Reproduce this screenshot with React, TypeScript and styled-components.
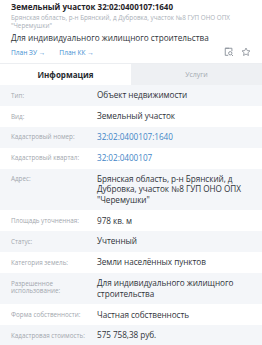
import styled, {createGlobalStyle} from 'styled-components';

const GlobalStyle = createGlobalStyle`
  body {
    margin: 0;
    background: #ffffff;
    font-family: "Open Sans", "Noto Sans", sans-serif;
  }
`;

const Page = styled.div`
  width: 262px;
  height: 345px;
  overflow: hidden;
  background: #ffffff;
`;

const Header = styled.div`
  padding: 1px 11px 5px;
`;

const Title = styled.h1`
  margin: 0;
  font-size: 8px;
  line-height: 12px;
  font-weight: 700;
  color: #1f2328;
`;

const Address = styled.div`
  margin-top: 1px;
  font-size: 6.3px;
  line-height: 7.5px;
  color: #aab0b8;
`;

const Purpose = styled.div`
  margin-top: 3px;
  font-size: 8.2px;
  line-height: 11px;
  color: #30343a;
`;

const LinksRow = styled.div`
  margin-top: 3px;
  height: 12px;
  display: flex;
  align-items: center;
`;

const PlanLink = styled.a`
  font-size: 6.6px;
  color: #3f8fd2;
  text-decoration: none;
  margin-right: 14px;
`;

const Actions = styled.div`
  margin-left: auto;
  display: flex;
  align-items: center;
  gap: 7px;
`;

const Tabs = styled.div`
  display: grid;
  grid-template-columns: 131px 1fr;
  height: 21px;
  border-top: 1px solid #eceef1;
`;

const Tab = styled.div<{active?: boolean}>`
  display: flex;
  align-items: center;
  justify-content: center;
  background: ${p => (p.active ? '#ffffff' : '#eef0f3')};
  color: ${p => (p.active ? '#26292e' : '#a4a9b0')};
  font-size: ${p => (p.active ? '8px' : '7px')};
  font-weight: ${p => (p.active ? 700 : 400)};
`;

const Row = styled.div<{shaded?: boolean}>`
  display: flex;
  padding: 5.2px 0 5.2px 11px;
  background: ${p => (p.shaded ? '#f4f6f9' : '#ffffff')};
`;

const Label = styled.div`
  width: 86px;
  flex-shrink: 0;
  margin-top: 1.5px;
  font-size: 6.3px;
  line-height: 7.5px;
  color: #a2a7ae;
`;

const Value = styled.div<{link?: boolean}>`
  flex: 1;
  font-size: 8.2px;
  line-height: 10.5px;
  letter-spacing: -0.05px;
  color: ${p => (p.link ? '#3f85c6' : '#30343a')};
`;

const SearchIcon = () => (
  <svg width="10" height="10" viewBox="0 0 12 12" fill="none" stroke="#8a9099" strokeWidth="1.1">
    <path d="M6 1.5H1.5v8.5H5" />
    <path d="M1.5 1.5h8v3.5" />
    <circle cx="7.5" cy="7.5" r="2" />
    <path d="M9 9l1.8 1.8" />
  </svg>
);

const StarIcon = () => (
  <svg width="10" height="10" viewBox="0 0 24 24" fill="none" stroke="#8a9099" strokeWidth="2" strokeLinejoin="round">
    <path d="M12 2.5l2.9 6 6.6.8-4.9 4.5 1.3 6.5L12 17l-5.9 3.3 1.3-6.5-4.9-4.5 6.6-.8z" />
  </svg>
);

const rows: {label: string; value: string; link?: boolean}[] = [
  {label: 'Тип:', value: 'Объект недвижимости'},
  {label: 'Вид:', value: 'Земельный участок'},
  {label: 'Кадастровый номер:', value: '32:02:0400107:1640', link: true},
  {label: 'Кадастровый квартал:', value: '32:02:0400107', link: true},
  {label: 'Адрес:', value: 'Брянская область, р-н Брянский, д Дубровка, участок №8 ГУП ОНО ОПХ "Черемушки"'},
  {label: 'Площадь уточненная:', value: '978 кв. м'},
  {label: 'Статус:', value: 'Учтенный'},
  {label: 'Категория земель:', value: 'Земли населённых пунктов'},
  {label: 'Разрешенное использование:', value: 'Для индивидуального жилищного строительства'},
  {label: 'Форма собственности:', value: 'Частная собственность'},
  {label: 'Кадастровая стоимость:', value: '575 758,38 руб.'},
];

export default function App() {
  return (
    <Page>
      <GlobalStyle />
      <Header>
        <Title>Земельный участок 32:02:0400107:1640</Title>
        <Address>
          Брянская область, р-н Брянский, д Дубровка, участок №8 ГУП ОНО ОПХ
          <br />
          "Черемушки"
        </Address>
        <Purpose>Для индивидуального жилищного строительства</Purpose>
        <LinksRow>
          <PlanLink>План ЗУ →</PlanLink>
          <PlanLink>План КК →</PlanLink>
          <Actions>
            <SearchIcon />
            <StarIcon />
          </Actions>
        </LinksRow>
      </Header>
      <Tabs>
        <Tab active>Информация</Tab>
        <Tab>Услуги</Tab>
      </Tabs>
      {rows.map((row, i) => (
        <Row key={row.label} shaded={i % 2 === 0}>
          <Label>{row.label}</Label>
          <Value link={row.link}>{row.value}</Value>
        </Row>
      ))}
    </Page>
  );
}
